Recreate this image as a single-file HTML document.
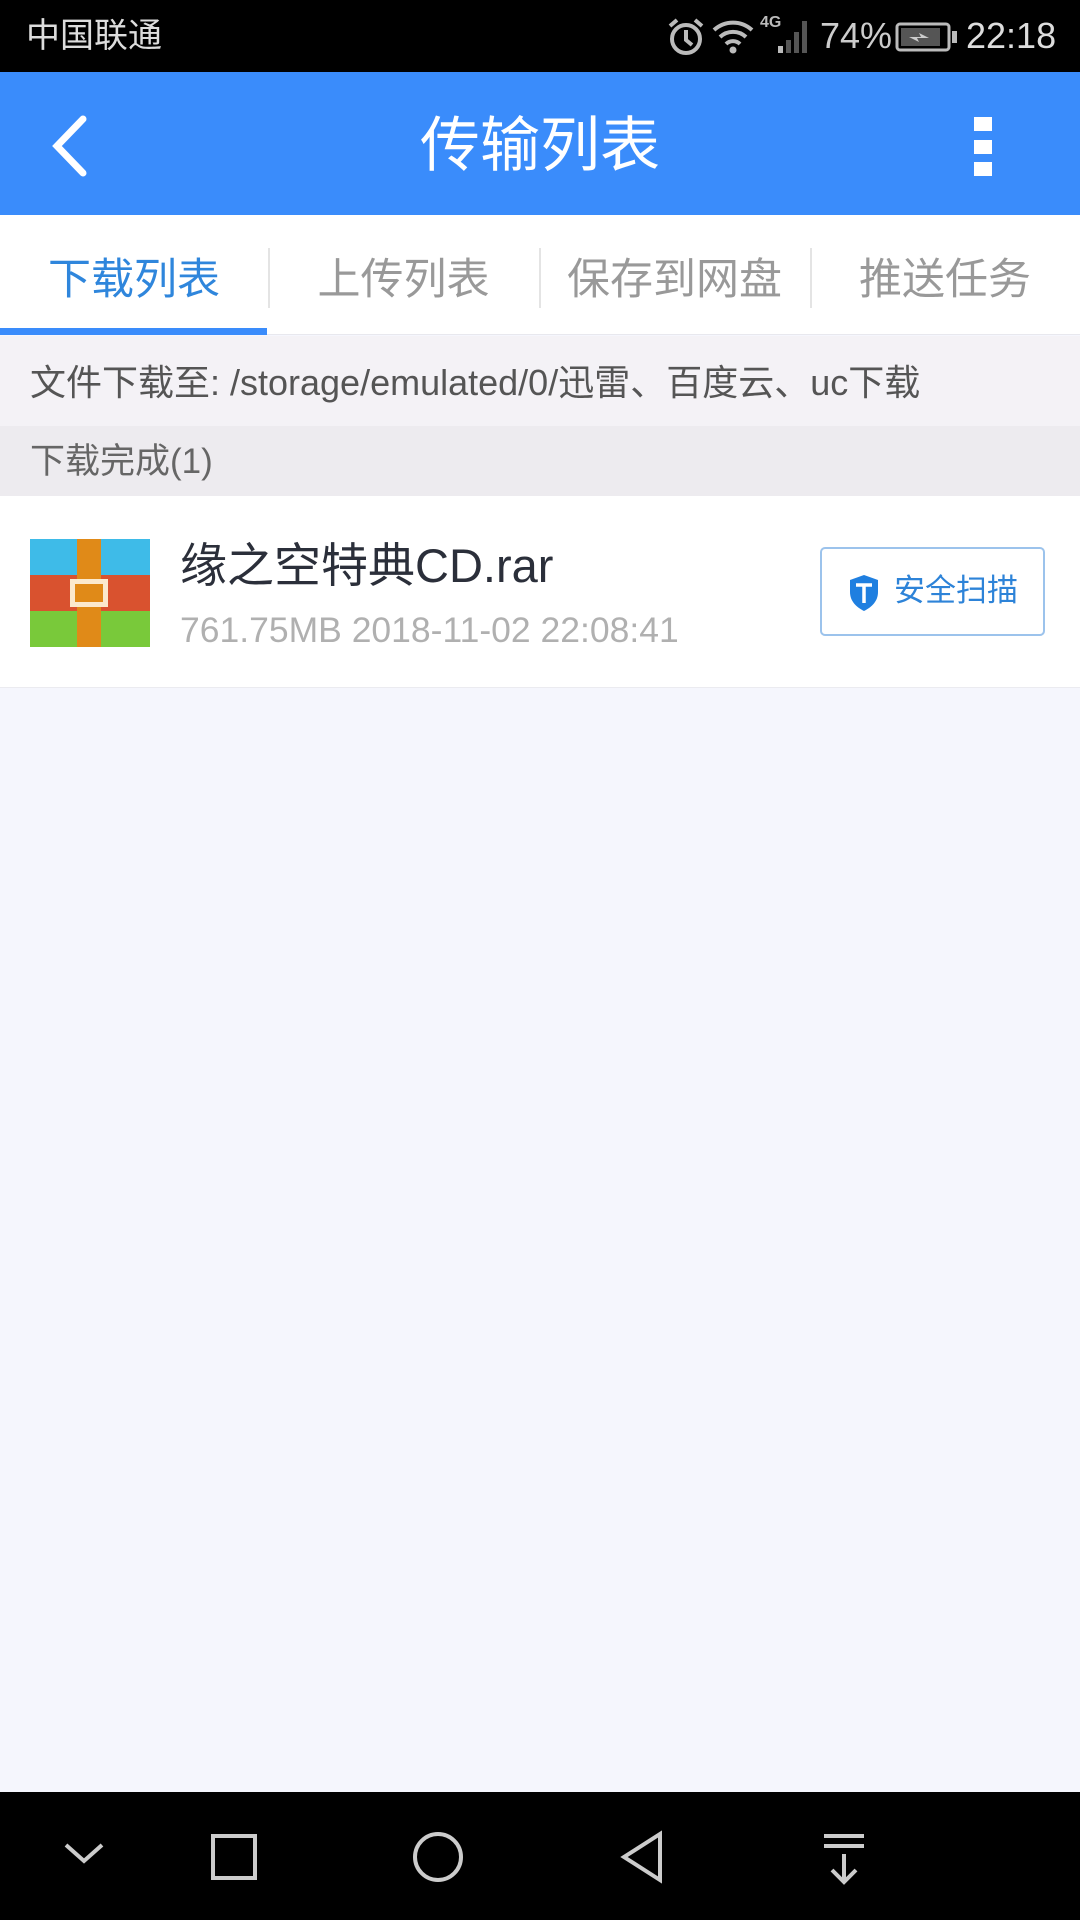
<!DOCTYPE html>
<html><head><meta charset="utf-8"><style>
*{margin:0;padding:0;box-sizing:border-box}
body{width:1080px;height:1920px;background:#f5f6fd;font-family:"Liberation Sans","Noto Sans CJK SC",sans-serif;position:relative;overflow:hidden}
.abs{position:absolute;white-space:nowrap}
</style></head><body>
<div class="abs" style="left:0;top:0;width:1080px;height:72px;background:#000"></div>
<div class="abs" style="left:26px;top:14px;color:#ddd;font-size:34px;line-height:44px">中国联通</div>
<svg class="abs" style="left:665px;top:16px" width="42" height="42" viewBox="0 0 42 42"><circle cx="21" cy="23" r="14" fill="none" stroke="#bbb" stroke-width="4"/><path d="M21 14v10l6 5M5 10l7-6M37 10l-7-6" stroke="#bbb" stroke-width="4" fill="none"/></svg>
<svg class="abs" style="left:712px;top:18px" width="44" height="36" viewBox="0 0 44 36"><path d="M2 12a28 28 0 0 1 38 0M8 19a19 19 0 0 1 26 0M14 26a10 10 0 0 1 14 0" stroke="#bbb" stroke-width="4" fill="none"/><circle cx="21" cy="32" r="3.5" fill="#bbb"/></svg>
<div class="abs" style="left:760px;top:14px;color:#bbb;font-size:16px;font-weight:bold">4G</div>
<svg class="abs" style="left:776px;top:18px" width="36" height="36"><rect x="2" y="28" width="5" height="7" fill="#bbb"/><rect x="10" y="22" width="5" height="13" fill="#555"/><rect x="18" y="14" width="5" height="21" fill="#555"/><rect x="26" y="3" width="5" height="32" fill="#555"/></svg>
<div class="abs" style="left:820px;top:14px;color:#ccc;font-size:36px;line-height:44px">74%</div>
<svg class="abs" style="left:895px;top:22px" width="64" height="30"><rect x="2" y="2" width="52" height="26" rx="3" fill="none" stroke="#bbb" stroke-width="3"/><rect x="6" y="6" width="39" height="18" fill="#555"/><rect x="57" y="9" width="5" height="12" fill="#bbb"/><path d="M14 15h12l-2-4 10 5h-12l2 4z" fill="#ccc"/></svg>
<div class="abs" style="left:966px;top:14px;color:#ddd;font-size:36px;line-height:44px">22:18</div>

<div class="abs" style="left:0;top:72px;width:1080px;height:143px;background:#3a8cfb"></div>
<svg class="abs" style="left:45px;top:113px" width="50" height="66"><path d="M38 6L12 33l26 27" stroke="#fff" stroke-width="7" fill="none" stroke-linecap="round"/></svg>
<div class="abs" style="left:0;top:108px;width:1080px;text-align:center;color:#fff;font-size:60px;line-height:76px">传输列表</div>
<div class="abs" style="left:974px;top:117px;width:18px;height:14px;background:#fff"></div>
<div class="abs" style="left:974px;top:140px;width:18px;height:14px;background:#fff"></div>
<div class="abs" style="left:974px;top:162px;width:18px;height:14px;background:#fff"></div>

<div class="abs" style="left:0;top:215px;width:1080px;height:120px;background:#fff;border-bottom:1px solid #e8e8ee"></div>
<div class="abs" style="left:0;top:251px;width:268px;text-align:center;color:#2f86dc;font-size:43px;line-height:58px">下载列表</div>
<div class="abs" style="left:268px;top:251px;width:271px;text-align:center;color:#999;font-size:43px;line-height:58px">上传列表</div>
<div class="abs" style="left:539px;top:251px;width:271px;text-align:center;color:#999;font-size:43px;line-height:58px">保存到网盘</div>
<div class="abs" style="left:810px;top:251px;width:270px;text-align:center;color:#999;font-size:43px;line-height:58px">推送任务</div>
<div class="abs" style="left:268px;top:248px;width:2px;height:60px;background:#e4e4e4"></div>
<div class="abs" style="left:539px;top:248px;width:2px;height:60px;background:#e4e4e4"></div>
<div class="abs" style="left:810px;top:248px;width:2px;height:60px;background:#e4e4e4"></div>
<div class="abs" style="left:0;top:328px;width:267px;height:7px;background:#3a8cfb"></div>

<div class="abs" style="left:0;top:336px;width:1080px;height:90px;background:#f4f2f6"></div>
<div class="abs" style="left:30px;top:359px;color:#555;font-size:36px;line-height:48px">文件下载至: /storage/emulated/0/迅雷、百度云、uc下载</div>
<div class="abs" style="left:0;top:426px;width:1080px;height:70px;background:#edebef"></div>
<div class="abs" style="left:30px;top:440px;color:#666;font-size:35px;line-height:44px">下载完成(1)</div>

<div class="abs" style="left:0;top:496px;width:1080px;height:192px;background:#fff;border-bottom:1px solid #ebebf0"></div>
<div class="abs" style="left:30px;top:539px;width:120px;height:36px;background:#3ebbe8"></div>
<div class="abs" style="left:30px;top:575px;width:120px;height:36px;background:#d9522f"></div>
<div class="abs" style="left:30px;top:611px;width:120px;height:36px;background:#79c93a"></div>
<div class="abs" style="left:77px;top:539px;width:24px;height:108px;background:#e08a18"></div>
<div class="abs" style="left:70px;top:579px;width:38px;height:28px;border:5px solid #fbe9cd;background:#e08a18"></div>
<div class="abs" style="left:180px;top:537px;color:#2b2f3a;font-size:47px;line-height:58px">缘之空特典CD.rar</div>
<div class="abs" style="left:180px;top:608px;color:#b0b0b0;font-size:35.5px;line-height:44px">761.75MB 2018-11-02 22:08:41</div>
<div class="abs" style="left:820px;top:547px;width:225px;height:89px;border:2px solid #9cc3ec;border-radius:5px"></div>
<svg class="abs" style="left:848px;top:574px" width="32" height="38" viewBox="0 0 32 38"><path d="M16 1L2 6v12c0 9 6 15 14 19 8-4 14-10 14-19V6z" fill="#1f7fe0"/><path d="M8 11h16M16 11v18" stroke="#fff" stroke-width="3.5"/></svg>
<div class="abs" style="left:894px;top:570px;color:#2d83d8;font-size:31px;line-height:42px">安全扫描</div>

<div class="abs" style="left:0;top:1792px;width:1080px;height:128px;background:#000"></div>
<svg class="abs" style="left:0;top:1792px" width="1080" height="128"><g stroke="#ccc" stroke-width="4" fill="none"><path d="M66 53l18 16 18-16"/><rect x="213" y="44" width="42" height="42"/><circle cx="438" cy="65" r="23"/><path d="M660 42v46l-36-23z"/><path d="M824 44h40M824 54h40M844 62v28M832 78l12 12 12-12"/></g></svg>
</body></html>
